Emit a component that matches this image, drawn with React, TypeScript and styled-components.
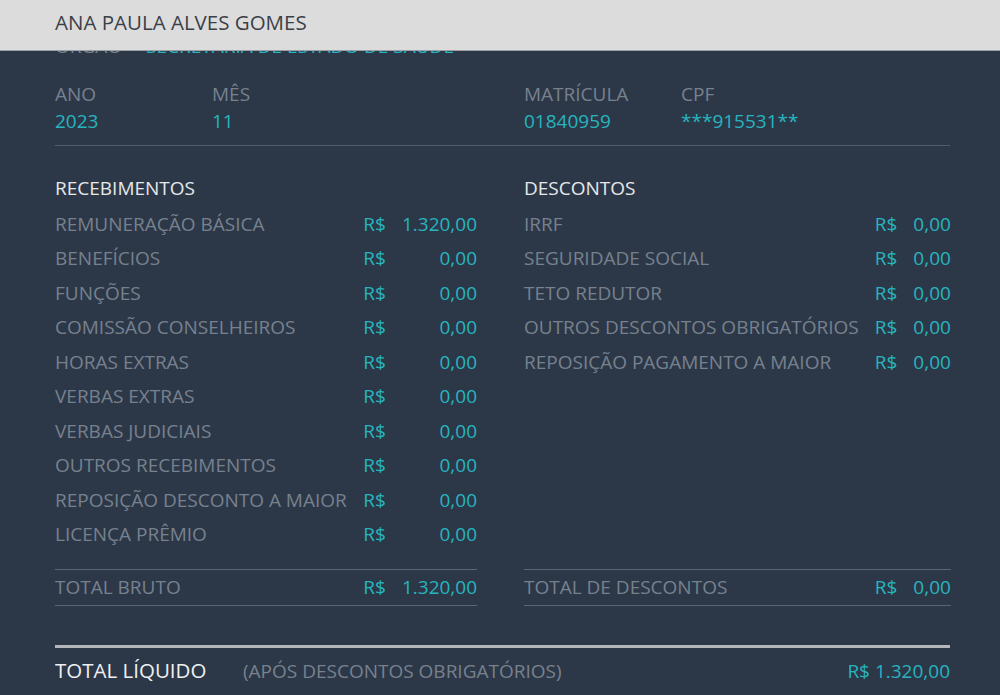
import React from "react"
import styled, { createGlobalStyle } from "styled-components"

interface Item {
	label: string
	value: string
}

const recebimentos: Item[] = [
	{ label: "REMUNERAÇÃO BÁSICA", value: "1.320,00" },
	{ label: "BENEFÍCIOS", value: "0,00" },
	{ label: "FUNÇÕES", value: "0,00" },
	{ label: "COMISSÃO CONSELHEIROS", value: "0,00" },
	{ label: "HORAS EXTRAS", value: "0,00" },
	{ label: "VERBAS EXTRAS", value: "0,00" },
	{ label: "VERBAS JUDICIAIS", value: "0,00" },
	{ label: "OUTROS RECEBIMENTOS", value: "0,00" },
	{ label: "REPOSIÇÃO DESCONTO A MAIOR", value: "0,00" },
	{ label: "LICENÇA PRÊMIO", value: "0,00" }
]

const descontos: Item[] = [
	{ label: "IRRF", value: "0,00" },
	{ label: "SEGURIDADE SOCIAL", value: "0,00" },
	{ label: "TETO REDUTOR", value: "0,00" },
	{ label: "OUTROS DESCONTOS OBRIGATÓRIOS", value: "0,00" },
	{ label: "REPOSIÇÃO PAGAMENTO A MAIOR", value: "0,00" }
]

// lista + total no mesmo grid pra alinhar as colunas de R$ e valor
const Section = ({ title, items, totalLabel, total }: { title: string; items: Item[]; totalLabel: string; total: string }) => (
	<Column>
		<SectionTitle>{title}</SectionTitle>
		<Grid $rows={items.length}>
			{items.map((item) => (
				<React.Fragment key={item.label}>
					<Label>{item.label}</Label>
					<Currency>R$</Currency>
					<Value>{item.value}</Value>
				</React.Fragment>
			))}
			<Spacer />
			<TotalLabel>{totalLabel}</TotalLabel>
			<TotalCurrency>R$</TotalCurrency>
			<TotalValue>{total}</TotalValue>
		</Grid>
	</Column>
)

const App = () => {
	return (
		<>
			<GlobalStyle />
			<Page>
				<Header>ANA PAULA ALVES GOMES</Header>
				<Body>
					<Content>
						<OrgaoRow>
							<FieldLabel>ÓRGÃO</FieldLabel>
							<FieldValue>SECRETARIA DE ESTADO DE SAÚDE</FieldValue>
						</OrgaoRow>
						<InfoGrid>
							<InfoGroup>
								<Field>
									<FieldLabel>ANO</FieldLabel>
									<FieldValue>2023</FieldValue>
								</Field>
								<Field>
									<FieldLabel>MÊS</FieldLabel>
									<FieldValue>11</FieldValue>
								</Field>
							</InfoGroup>
							<InfoGroup>
								<Field>
									<FieldLabel>MATRÍCULA</FieldLabel>
									<FieldValue>01840959</FieldValue>
								</Field>
								<Field>
									<FieldLabel>CPF</FieldLabel>
									<FieldValue>***915531**</FieldValue>
								</Field>
							</InfoGroup>
						</InfoGrid>
						<Columns>
							<Section title="RECEBIMENTOS" items={recebimentos} totalLabel="TOTAL BRUTO" total="1.320,00" />
							<Section title="DESCONTOS" items={descontos} totalLabel="TOTAL DE DESCONTOS" total="0,00" />
						</Columns>
						<NetRow>
							<NetLabel>TOTAL LÍQUIDO</NetLabel>
							<NetNote>(APÓS DESCONTOS OBRIGATÓRIOS)</NetNote>
							<NetValue>R$ 1.320,00</NetValue>
						</NetRow>
					</Content>
				</Body>
			</Page>
		</>
	)
}

const GlobalStyle = createGlobalStyle`
	html, body {
		margin: 0;
		padding: 0;
		background: #2c3848;
	}
	body {
		font-family: "Open Sans", "Noto Sans", sans-serif;
		font-size: 19px;
	}
`

const Page = styled.div`
	width: 1000px;
	height: 695px;
	display: flex;
	flex-direction: column;
	overflow: hidden;
	background: #2c3848;
`

const Header = styled.div`
	flex: none;
	height: 51px;
	box-sizing: border-box;
	padding: 8px 55px 0;
	background: #dcdcdc;
	border-bottom: 1px solid #9da1a6;
	color: #3b4048;
	font-size: 20.5px;
	line-height: 28px;
`

const Body = styled.div`
	flex: 1;
	overflow: hidden;
`

const Content = styled.div`
	margin-top: -18px;
	padding: 0 50px 0 55px;
	display: flex;
	flex-direction: column;
`

const OrgaoRow = styled.div`
	display: flex;
	gap: 24px;
	line-height: 26px;
`

const InfoGrid = styled.div`
	display: grid;
	grid-template-columns: 422px 1fr;
	column-gap: 47px;
	margin-top: 21.6px;
	padding-bottom: 11.5px;
	border-bottom: 1px solid #535d6a;
`

const InfoGroup = styled.div`
	display: flex;
`

const Field = styled.div`
	width: 157px;
	display: flex;
	flex-direction: column;
	gap: 1px;
	line-height: 26px;
`

const FieldLabel = styled.span`
	color: #77818e;
`

const FieldValue = styled.span`
	color: #27b4bf;
`

const Columns = styled.div`
	display: grid;
	grid-template-columns: 422px 1fr;
	column-gap: 47px;
	margin-top: 28.6px;
`

const Column = styled.div`
	display: flex;
	flex-direction: column;
`

const SectionTitle = styled.div`
	color: #e6e8ea;
	line-height: 26px;
	margin-bottom: 6.3px;
`

const Grid = styled.div<{ $rows: number }>`
	flex: 1;
	display: grid;
	grid-template-columns: 1fr auto auto;
	grid-template-rows: repeat(${({ $rows }) => $rows}, 34.5px) minmax(17.1px, 1fr) auto;
	line-height: 34.5px;
`

const Label = styled.span`
	color: #77818e;
	white-space: nowrap;
`

const Currency = styled.span`
	color: #27b4bf;
	padding-left: 16px;
`

const Value = styled.span`
	color: #27b4bf;
	text-align: right;
	padding-left: 16px;
`

const Spacer = styled.div`
	grid-column: 1 / -1;
`

const TotalCell = `
	line-height: 26px;
	padding-top: 3.5px;
	padding-bottom: 5.5px;
	border-top: 1px solid #5b6572;
	border-bottom: 1px solid #5b6572;
`

const TotalLabel = styled(Label)`
	${TotalCell}
`

const TotalCurrency = styled(Currency)`
	${TotalCell}
`

const TotalValue = styled(Value)`
	${TotalCell}
`

const NetRow = styled.div`
	display: flex;
	align-items: baseline;
	margin-top: 39px;
	border-top: 3px solid #b3b7bb;
	padding-top: 8px;
`

const NetLabel = styled.span`
	color: #eef0f2;
	font-size: 20.5px;
	line-height: 28px;
	width: 188px;
`

const NetNote = styled.span`
	color: #77818e;
	flex: 1;
`

const NetValue = styled.span`
	color: #27b4bf;
`

export default App
